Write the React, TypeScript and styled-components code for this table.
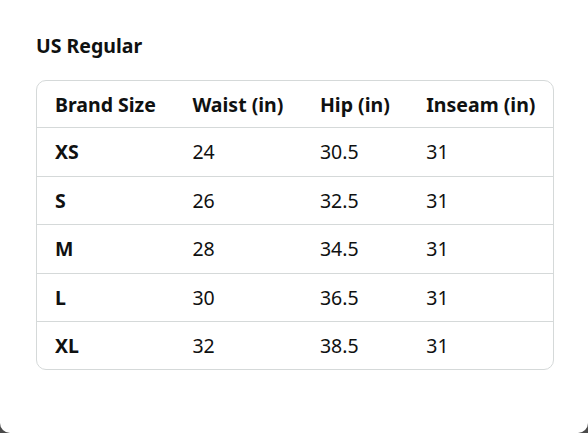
import styled, { createGlobalStyle } from "styled-components";

const GlobalStyle = createGlobalStyle`
  html, body {
    margin: 0;
    padding: 0;
  }
  body {
    background: linear-gradient(to bottom, #ffffff 0 420px, #4a4a4a 420px 433px, #ffffff 433px);
    font-family: "Noto Sans", "Open Sans", Arial, sans-serif;
    color: #0f1111;
  }
`;

const Sheet = styled.div`
  width: 588px;
  height: 433px;
  box-sizing: border-box;
  background: #ffffff;
  border-radius: 0 0 10px 10px;
  padding: 33px 35px 0 36px;
`;

const Title = styled.h2`
  margin: 0 0 21px;
  font-size: 19.5px;
  font-weight: 700;
  line-height: 26px;
`;

const TableBox = styled.div`
  border: 1px solid #d5d9d9;
  border-radius: 10px;
  overflow: hidden;
  width: max-content;
`;

const Table = styled.table`
  border-collapse: collapse;
  font-size: 19.5px;
`;

const HeadCell = styled.th`
  text-align: left;
  font-weight: 700;
  padding: 0 18px 0 18.5px;
  height: 46px;
  border-bottom: 1px solid #d5d9d9;
  white-space: nowrap;
  &:first-child {
    padding-left: 18px;
  }
`;

const Cell = styled.td<{ $bold?: boolean; $last?: boolean }>`
  padding: 0 18px 0 18.5px;
  height: ${(p) => (p.$last ? "46.5px" : "47.5px")};
  font-weight: ${(p) => (p.$bold ? 700 : 400)};
  border-bottom: ${(p) => (p.$last ? "none" : "1px solid #d5d9d9")};
  white-space: nowrap;
  &:first-child {
    padding-left: 18px;
  }
`;

const columns = ["Brand Size", "Waist (in)", "Hip (in)", "Inseam (in)"];

const rows = [
  ["XS", "24", "30.5", "31"],
  ["S", "26", "32.5", "31"],
  ["M", "28", "34.5", "31"],
  ["L", "30", "36.5", "31"],
  ["XL", "32", "38.5", "31"],
];

export default function App() {
  return (
    <>
      <GlobalStyle />
      <Sheet>
        <Title>US Regular</Title>
        <TableBox>
          <Table>
            <thead>
              <tr>
                {columns.map((c) => (
                  <HeadCell key={c}>{c}</HeadCell>
                ))}
              </tr>
            </thead>
            <tbody>
              {rows.map((r, i) => (
                <tr key={r[0]}>
                  {r.map((v, j) => (
                    <Cell key={j} $bold={j === 0} $last={i === rows.length - 1}>
                      {v}
                    </Cell>
                  ))}
                </tr>
              ))}
            </tbody>
          </Table>
        </TableBox>
      </Sheet>
    </>
  );
}
